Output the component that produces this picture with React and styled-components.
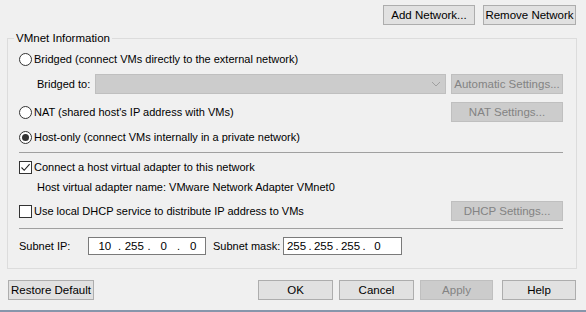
import React from 'react';
import styled, { createGlobalStyle } from 'styled-components';

const Global = createGlobalStyle`
  html, body {
    margin: 0;
    padding: 0;
    background: #f0f0f0;
  }
  body {
    font-family: "Liberation Sans", Arial, sans-serif;
    font-size: 11px;
    color: #000;
  }
`;

const Dialog = styled.div`
  width: 586px;
  height: 312px;
  background: #f0f0f0;
  display: flex;
  flex-direction: column;
  box-sizing: border-box;
  overflow: hidden;
`;

const TopBar = styled.div`
  display: flex;
  justify-content: flex-end;
  gap: 8px;
  padding: 5px 10px 0 0;
`;

const Button = styled.button`
  box-sizing: border-box;
  height: 20px;
  width: ${(p) => p.$w || 75}px;
  margin-left: ${(p) => p.$ml || 0}px;
  padding: 0;
  font: inherit;
  font-size: 11.5px;
  color: ${(p) => (p.disabled ? '#838383' : '#000')};
  background: ${(p) => (p.disabled ? '#cccccc' : '#e1e1e1')};
  border: 1px solid ${(p) => (p.disabled ? '#bfbfbf' : '#adadad')};
  line-height: 18px;
  white-space: nowrap;
`;

const GroupBox = styled.div`
  position: relative;
  margin: 13px 9px 0 7px;
  border: 1px solid #dcdcdc;
  padding: 10px 13px 12px 11px;
  display: flex;
  flex-direction: column;
`;

const GroupTitle = styled.span`
  position: absolute;
  top: -9px;
  left: 6px;
  padding: 0 2px;
  background: #f0f0f0;
  line-height: 16px;
  font-size: 11.5px;
`;

const Row = styled.div`
  display: flex;
  align-items: center;
  height: 20px;
  margin-top: ${(p) => p.$mt || 0}px;
  padding-left: ${(p) => p.$indent || 0}px;
  white-space: nowrap;
`;

const Separator = styled.div`
  height: 1px;
  background: #a0a0a0;
  margin-top: ${(p) => p.$mt || 0}px;
`;

const RadioCircle = styled.span`
  box-sizing: border-box;
  width: 13px;
  height: 13px;
  border-radius: 50%;
  border: 1px solid #333;
  background: #fff;
  display: inline-flex;
  align-items: center;
  justify-content: center;
  margin-right: 2px;
  flex: none;

  &::after {
    content: '';
    width: 7px;
    height: 7px;
    border-radius: 50%;
    background: ${(p) => (p.$checked ? '#333' : 'transparent')};
  }
`;

const CheckBox = styled.span`
  box-sizing: border-box;
  width: 13px;
  height: 13px;
  border: 1px solid #333;
  background: #fff;
  display: inline-flex;
  align-items: center;
  justify-content: center;
  margin-right: 2px;
  flex: none;
`;

const Label = styled.span`
  width: ${(p) => (p.$w ? `${p.$w}px` : 'auto')};
  flex: none;
`;

const Combo = styled.div`
  box-sizing: border-box;
  width: 351px;
  height: 20px;
  background: #cccccc;
  border: 1px solid #bfbfbf;
  display: flex;
  align-items: center;
  justify-content: flex-end;
  padding-right: 4px;
`;

const RightButton = styled(Button)`
  margin-left: auto;
`;

const IpBox = styled.div`
  box-sizing: border-box;
  width: ${(p) => p.$w}px;
  height: 18px;
  background: #fff;
  border: 1px solid #7a7a7a;
  display: flex;
  align-items: center;
  padding-left: ${(p) => p.$pl || 2}px;
  margin-right: ${(p) => p.$mr || 0}px;
  flex: none;
`;

const IpField = styled.span`
  width: ${(p) => p.$w || 23}px;
  text-align: center;
  line-height: 16px;
  font-size: 11.5px;
`;

const IpDot = styled.span`
  width: 6px;
  text-align: center;
  line-height: 16px;
`;

const BottomBar = styled.div`
  display: flex;
  align-items: center;
  gap: 6px;
  padding: 0 10px 0 8px;
  margin-top: 11px;
`;

const Spacer = styled.div`
  flex: 1;
`;

const Strip = styled.div`
  margin-top: auto;
  height: 2px;
  background: #8796ab;
`;

function Radio({ checked, children }) {
  return (
    <>
      <RadioCircle $checked={checked} />
      <span>{children}</span>
    </>
  );
}

function Check({ checked, children }) {
  return (
    <>
      <CheckBox>
        {checked && (
          <svg width="11" height="11" viewBox="0 0 11 11">
            <path d="M1.5 5.5 L4.2 8.3 L9.6 2.2" fill="none" stroke="#222" strokeWidth="1.1" />
          </svg>
        )}
      </CheckBox>
      <span>{children}</span>
    </>
  );
}

function IpAddress({ parts, w, mr, fw, pl }) {
  return (
    <IpBox $w={w} $mr={mr} $pl={pl}>
      {parts.map((p, i) => (
        <React.Fragment key={i}>
          {i > 0 && <IpDot>.</IpDot>}
          <IpField $w={fw}>{p}</IpField>
        </React.Fragment>
      ))}
    </IpBox>
  );
}

export default function App() {
  return (
    <Dialog>
      <Global />
      <TopBar>
        <Button $w={92}>Add Network...</Button>
        <Button $w={93}>Remove Network</Button>
      </TopBar>

      <GroupBox>
        <GroupTitle>VMnet Information</GroupTitle>

        <Row>
          <Radio>Bridged (connect VMs directly to the external network)</Radio>
        </Row>
        <Row $mt={5} $indent={18}>
          <Label $w={58}>Bridged to:</Label>
          <Combo>
            <svg width="10" height="6" viewBox="0 0 10 6">
              <path d="M1 1 L5 5 L9 1" fill="none" stroke="#a0a0a0" strokeWidth="1" />
            </svg>
          </Combo>
          <RightButton $w={112} disabled>Automatic Settings...</RightButton>
        </Row>
        <Row $mt={8}>
          <Radio>NAT (shared host's IP address with VMs)</Radio>
          <RightButton $w={112} disabled>NAT Settings...</RightButton>
        </Row>
        <Row $mt={5}>
          <Radio checked>Host-only (connect VMs internally in a private network)</Radio>
        </Row>

        <Separator $mt={5} />

        <Row $mt={4}>
          <Check checked>Connect a host virtual adapter to this network</Check>
        </Row>
        <Row $indent={18}>
          <span>Host virtual adapter name: VMware Network Adapter VMnet0</span>
        </Row>
        <Row $mt={4}>
          <Check>Use local DHCP service to distribute IP address to VMs</Check>
          <RightButton $w={112} disabled>DHCP Settings...</RightButton>
        </Row>

        <Separator $mt={7} />

        <Row $mt={7}>
          <Label $w={69}>Subnet IP:</Label>
          <IpAddress parts={['10', '255', '0', '0']} w={118} mr={7} pl={4} fw={24} />
          <Label $w={70}>Subnet mask:</Label>
          <IpAddress parts={['255', '255', '255', '0']} w={119} pl={0} fw={21} />
        </Row>
      </GroupBox>

      <BottomBar>
        <Button $w={86}>Restore Default</Button>
        <Spacer />
        <Button>OK</Button>
        <Button>Cancel</Button>
        <Button $w={73} disabled>Apply</Button>
        <Button $w={74} $ml={3}>Help</Button>
      </BottomBar>

      <Strip />
    </Dialog>
  );
}
